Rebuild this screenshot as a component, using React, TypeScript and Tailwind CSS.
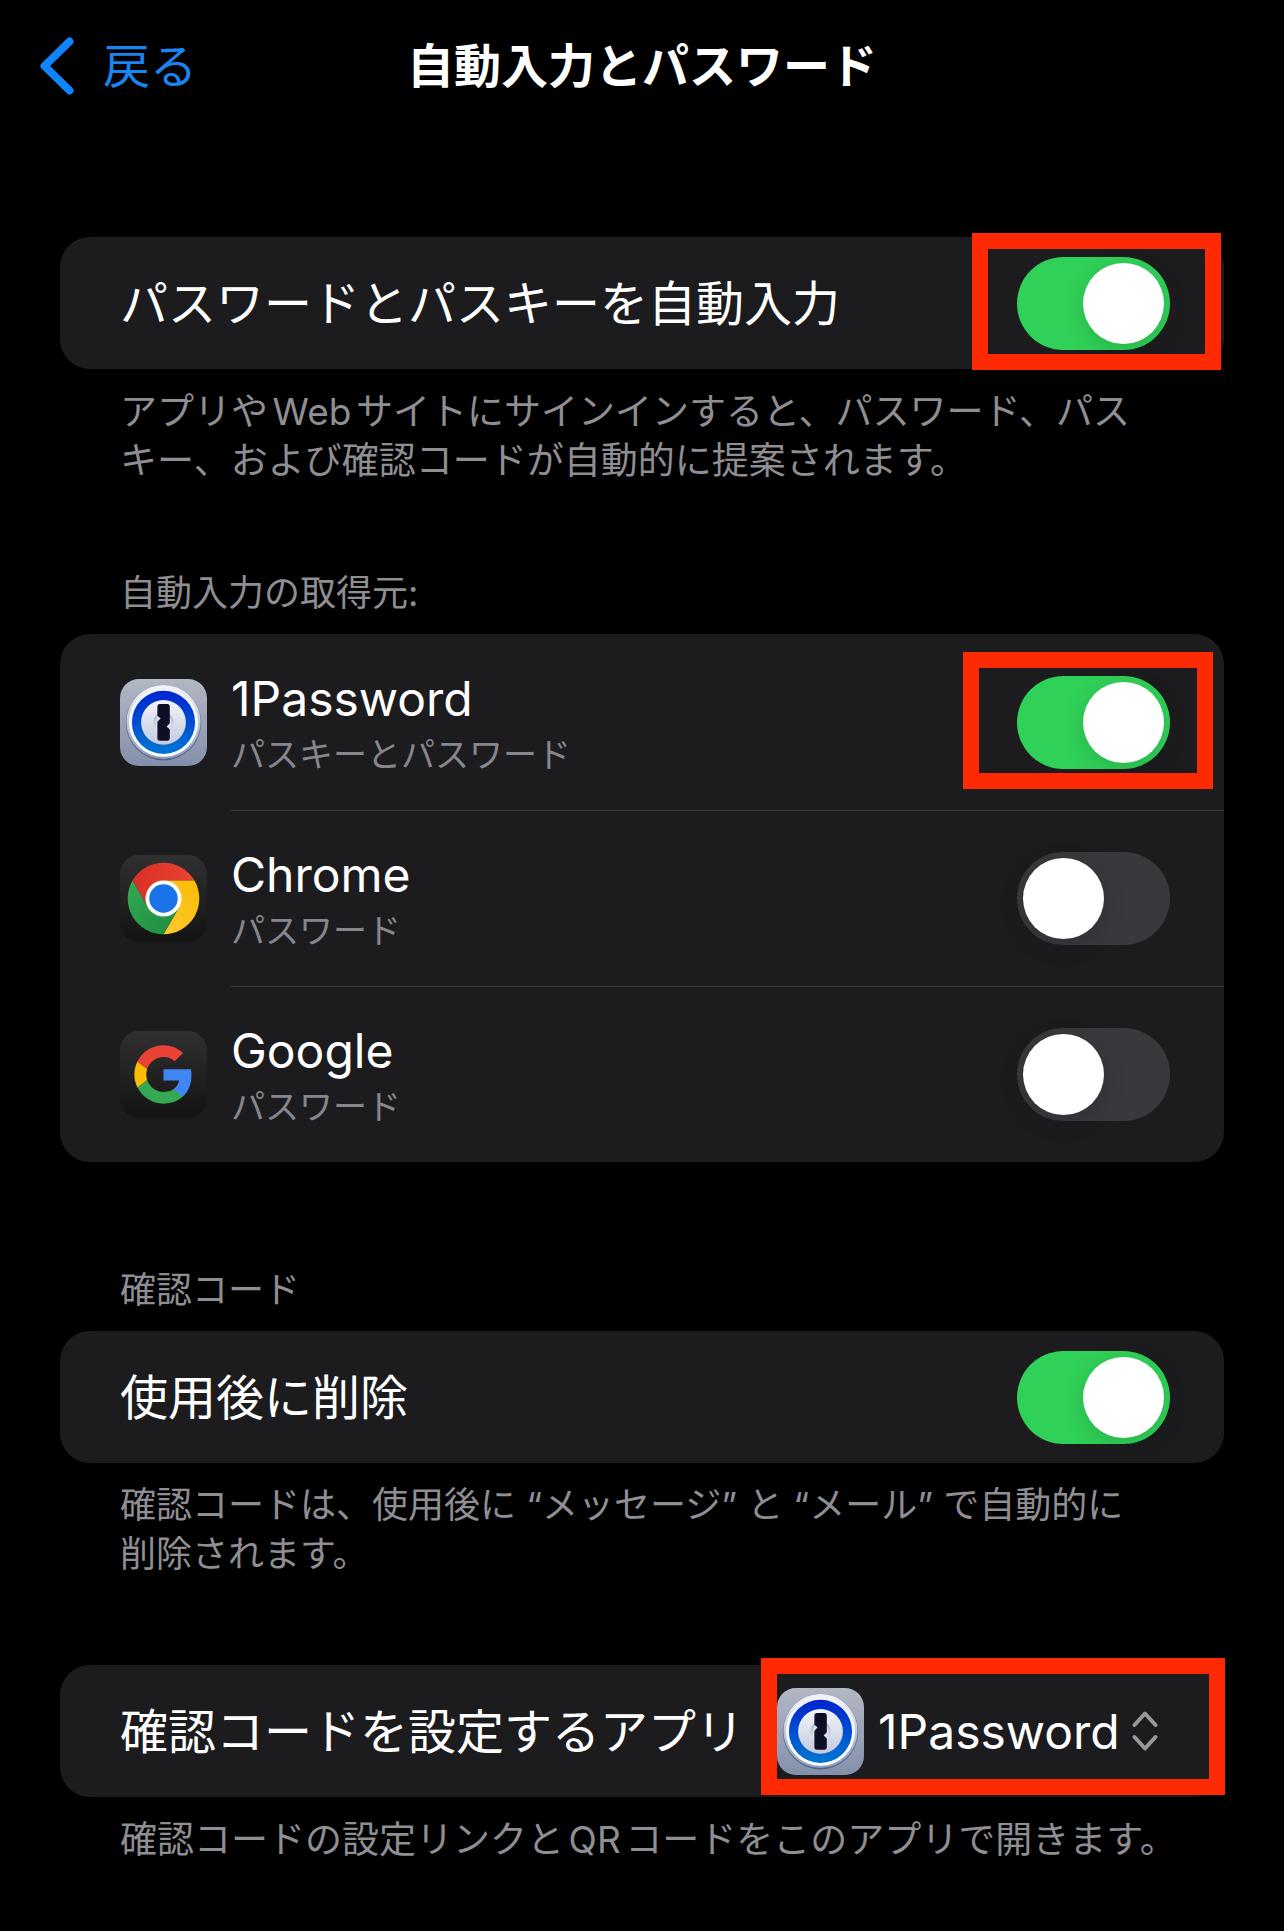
import type { ReactNode } from "react";

function OnePasswordIcon() {
  return (
    <svg viewBox="0 0 87 87" className="size-[87px] shrink-0" aria-hidden="true">
      <defs>
        <linearGradient id="op-plate" x1="0" y1="0" x2="0" y2="1">
          <stop offset="0" stopColor="#b3b7c4" />
          <stop offset="1" stopColor="#8490ab" />
        </linearGradient>
        <linearGradient id="op-edge" x1="0" y1="0" x2="0" y2="1">
          <stop offset="0" stopColor="#8f94a8" />
          <stop offset="1" stopColor="#50608a" />
        </linearGradient>
        <linearGradient id="op-rim" x1="0" y1="0" x2="0" y2="1">
          <stop offset="0" stopColor="#f4f6fa" />
          <stop offset="1" stopColor="#8e9dbd" />
        </linearGradient>
        <linearGradient id="op-white" x1="0" y1="0" x2="0" y2="1">
          <stop offset="0" stopColor="#eef2f8" />
          <stop offset="1" stopColor="#ffffff" />
        </linearGradient>
        <linearGradient id="op-blue" x1="0" y1="0" x2="0" y2="1">
          <stop offset="0" stopColor="#0024cf" />
          <stop offset="1" stopColor="#0077d2" />
        </linearGradient>
        <linearGradient id="op-face" x1="0" y1="0" x2="0" y2="1">
          <stop offset="0" stopColor="#f3f4f9" />
          <stop offset="1" stopColor="#c3cbe0" />
        </linearGradient>
        <linearGradient id="op-dial" x1="0" y1="0" x2="0" y2="1">
          <stop offset="0" stopColor="#a9afc2" />
          <stop offset="1" stopColor="#e6e9f2" />
        </linearGradient>
      </defs>
      <rect width="87" height="87" rx="19" fill="url(#op-plate)" />
      <circle cx="43.5" cy="43.6" r="37.8" fill="url(#op-edge)" />
      <circle cx="43.5" cy="43" r="37" fill="url(#op-rim)" />
      <circle cx="43.5" cy="43.2" r="34.6" fill="url(#op-white)" />
      <circle cx="43.5" cy="43.4" r="31.6" fill="url(#op-blue)" />
      <circle cx="43.5" cy="43.4" r="22.4" fill="url(#op-face)" />
      <circle cx="43.5" cy="43.4" r="10.3" fill="url(#op-dial)" />
      <circle cx="43.5" cy="43.4" r="8" fill="#dadeea" />
      <path
        d="M40 25h7.200a2.600 2.600 0 0 1 2.600 2.600v16.600l-3.200 3.200 3.200 3v8.700a2.600 2.600 0 0 1-2.600 2.600H40a2.600 2.600 0 0 1-2.600-2.600V42.800l3.200-3.200-3.200-3v-9A2.600 2.600 0 0 1 40 25z"
        fill="#0d0f26"
      />
    </svg>
  );
}

function DarkPlate() {
  return (
    <>
      <defs>
        <linearGradient id="dark-plate" x1="0" y1="0" x2="0" y2="1">
          <stop offset="0" stopColor="#303030" />
          <stop offset="1" stopColor="#131313" />
        </linearGradient>
      </defs>
      <rect width="87" height="87" rx="19" fill="url(#dark-plate)" />
    </>
  );
}

function ChromeIcon() {
  return (
    <svg viewBox="0 0 87 87" className="size-[87px] shrink-0" aria-hidden="true">
      <defs>
        <linearGradient id="c-red" x1="0" y1="0" x2="1" y2="0">
          <stop offset="0" stopColor="#d93025" />
          <stop offset="1" stopColor="#ea4335" />
        </linearGradient>
        <linearGradient id="c-yellow" x1="0" y1="1" x2="1" y2="0">
          <stop offset="0" stopColor="#fcc934" />
          <stop offset="1" stopColor="#fbbc04" />
        </linearGradient>
        <linearGradient id="c-green" x1="0" y1="0" x2="1" y2="1">
          <stop offset="0" stopColor="#34a853" />
          <stop offset="1" stopColor="#1e8e3e" />
        </linearGradient>
      </defs>
      <DarkPlate />
      <path d="M12.500 25.600A35.800 35.800 0 0 1 74.500 25.600H43.500L28 52.400z" fill="url(#c-red)" />
      <path d="M74.500 25.600A35.800 35.800 0 0 1 43.500 79.300L59 52.400 43.500 25.600z" fill="url(#c-yellow)" />
      <path d="M43.500 79.300A35.800 35.800 0 0 1 12.500 25.600L28 52.400H59z" fill="url(#c-green)" />
      <circle cx="43.500" cy="43.500" r="18" fill="#fff" />
      <circle cx="43.500" cy="43.500" r="14.200" fill="#1a73e8" />
    </svg>
  );
}

function GoogleIcon() {
  return (
    <svg viewBox="0 0 87 87" className="size-[87px] shrink-0" aria-hidden="true">
      <DarkPlate />
      <g transform="translate(11.700 11.700) scale(2.650)">
        <path fill="#4285f4" d="M22.560 12.250c0-.78-.07-1.530-.2-2.250H12v4.260h5.920c-.26 1.370-1.040 2.530-2.210 3.310v2.770h3.570c2.080-1.920 3.280-4.740 3.280-8.090z" />
        <path fill="#34a853" d="M12 23c2.970 0 5.460-.98 7.280-2.660l-3.570-2.770c-.98.66-2.230 1.060-3.710 1.060-2.860 0-5.290-1.930-6.160-4.530L2.180 16.940C3.990 20.530 7.700 23 12 23z" />
        <path fill="#fbbc05" d="M5.840 14.090c-.22-.66-.35-1.360-.35-2.090s.13-1.430.35-2.090L2.180 7.070C1.430 8.550 1 10.220 1 12s.43 3.450 1.180 4.930z" />
        <path fill="#ea4335" d="M12 5.380c1.620 0 3.060.56 4.210 1.640l3.150-3.150C17.450 2.090 14.970 1 12 1 7.700 1 3.990 3.470 2.180 7.070l3.660 2.840c.87-2.600 3.300-4.530 6.160-4.530z" />
      </g>
    </svg>
  );
}

function Switch({ id, on = false, frame }: { id: string; on?: boolean; frame?: string }) {
  return (
    <span className="relative flex shrink-0">
      <input
        id={id}
        type="checkbox"
        role="switch"
        defaultChecked={on}
        className="h-[93px] w-[153px] cursor-pointer appearance-none rounded-full bg-[#39393d] before:m-[6px] before:block before:size-[81px] before:rounded-full before:bg-white before:shadow-[0_6px_24px_rgba(0,0,0,0.15)] checked:bg-[#30d158] checked:before:ml-[66px]"
      />
      {frame && <span className={`pointer-events-none absolute border-16 border-[#ff2a04] ${frame}`} />}
    </span>
  );
}

function Card({ children }: { children: ReactNode }) {
  return <div className="rounded-[30px] bg-[#1c1c1e]">{children}</div>;
}

function Row({ children }: { children: ReactNode }) {
  return <div className="flex h-[132px] items-center justify-between pr-[54px] pl-[60px]">{children}</div>;
}

function Note({ children, size = "text-[37px]" }: { children: ReactNode; size?: string }) {
  return <p className={`mt-[18px] pr-6 pl-[60px] leading-[49px] text-[#8e8e93] ${size}`}>{children}</p>;
}

function Heading({ children }: { children: ReactNode }) {
  return <h2 className="mb-4 px-[60px] text-[36px] leading-[49px] text-[#8e8e93]">{children}</h2>;
}

const sources = [
  { id: "src-1password", name: "1Password", detail: "パスキーとパスワード", icon: <OnePasswordIcon />, on: true, frame: "-top-6 -right-[43px] -bottom-5 -left-[54px]" },
  { id: "src-chrome", name: "Chrome", detail: "パスワード", icon: <ChromeIcon />, on: false, frame: undefined },
  { id: "src-google", name: "Google", detail: "パスワード", icon: <GoogleIcon />, on: false, frame: undefined },
];

export default function App() {
  return (
    <div
      lang="ja"
      className="min-h-screen bg-black pb-[68px] font-['Inter','Noto_Sans_CJK_JP',sans-serif] text-[48px] leading-[60px] text-white [text-autospace:normal]"
    >
      <header className="grid h-[132px] grid-cols-[1fr_auto_1fr] items-center px-10 text-[47px]">
        <button type="button" className="flex items-center gap-[29px] justify-self-start text-[#1a84f0]">
          <svg viewBox="0 0 34 58" className="h-[58px] w-[34px]" fill="none" stroke="#0f84fb" strokeWidth="8" strokeLinecap="round" strokeLinejoin="round" aria-hidden="true">
            <path d="M29.500 4.500L4.500 29l25 24.500" />
          </svg>
          戻る
        </button>
        <h1 className="font-bold">自動入力とパスワード</h1>
      </header>

      <main className="px-[60px] pt-[105px]">
        <section>
          <Card>
            <Row>
              <label htmlFor="autofill" className="pt-0.5">パスワードとパスキーを自動入力</label>
              <Switch id="autofill" on frame="-top-6 -right-[51px] -bottom-5 -left-[45px]" />
            </Row>
          </Card>
          <Note>
            アプリやWebサイトにサインインすると、パスワード、パス
            <br />
            キー、および確認コードが自動的に提案されます。
          </Note>
        </section>

        <section className="mt-[84px]">
          <Heading>自動入力の取得元:</Heading>
          <Card>
            <ul>
              {sources.map((s) => (
                <li key={s.id} className="group flex h-44 items-center pl-[60px]">
                  {s.icon}
                  <div className="ml-6 flex h-full flex-1 items-center justify-between border-t border-[#3b3b3e] pr-[54px] group-first:border-transparent">
                    <label htmlFor={s.id} className="flex flex-col pt-1">
                      <span className="leading-[60px]">{s.name}</span>
                      <span className="text-[34px] leading-[52px] text-[#87878b]">{s.detail}</span>
                    </label>
                    <Switch id={s.id} on={s.on} frame={s.frame} />
                  </div>
                </li>
              ))}
            </ul>
          </Card>
        </section>

        <section className="mt-[104px]">
          <Heading>確認コード</Heading>
          <Card>
            <Row>
              <label htmlFor="cleanup" className="pt-0.5">使用後に削除</label>
              <Switch id="cleanup" on />
            </Row>
          </Card>
          <Note size="text-[36px]">
            確認コードは、使用後に “メッセージ” と “メール” で自動的に
            <br />
            削除されます。
          </Note>
        </section>

        <section className="mt-[86px]">
          <Card>
            <Row>
              <label htmlFor="code-app" className="pt-0.5 whitespace-nowrap">確認コードを設定するアプリ</label>
              <div className="relative mr-3 flex items-center">
                <OnePasswordIcon />
                <select id="code-app" className="ml-[14px] cursor-pointer appearance-none bg-transparent pt-0.5 leading-[60px]">
                  <option>1Password</option>
                </select>
                <svg viewBox="0 0 26 40" className="ml-3 h-10 w-[26px]" fill="none" stroke="#97979c" strokeWidth="4" strokeLinecap="round" strokeLinejoin="round" aria-hidden="true">
                  <path d="M2.500 14L13 2.500 23.500 14M2.500 26L13 37.500 23.500 26" />
                </svg>
                <span className="pointer-events-none absolute -top-[30px] -right-[67px] -bottom-5 -left-4 border-16 border-[#ff2a04]" />
              </div>
            </Row>
          </Card>
          <Note>確認コードの設定リンクとQRコードをこのアプリで開きます。</Note>
        </section>
      </main>
    </div>
  );
}
